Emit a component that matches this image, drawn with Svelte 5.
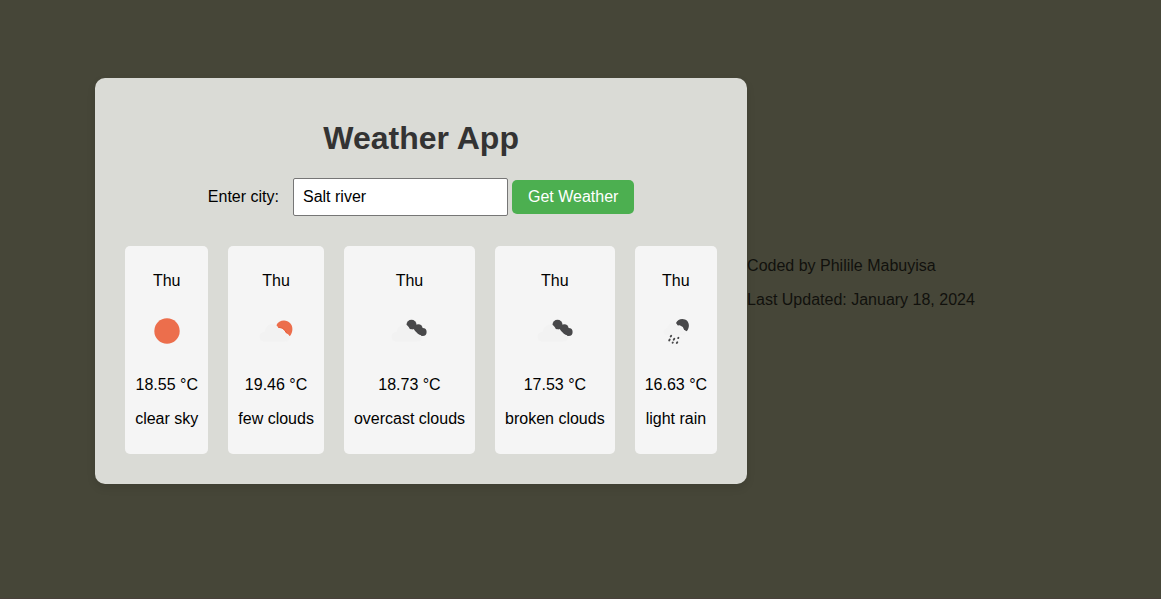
<script>
  let city = $state('Salt river');

  const forecast = [
    { day: 'Thu', icon: 'sun', temp: '18.55 °C', text: 'clear sky' },
    { day: 'Thu', icon: 'few', temp: '19.46 °C', text: 'few clouds' },
    { day: 'Thu', icon: 'clouds', temp: '18.73 °C', text: 'overcast clouds' },
    { day: 'Thu', icon: 'clouds', temp: '17.53 °C', text: 'broken clouds' },
    { day: 'Thu', icon: 'rain', temp: '16.63 °C', text: 'light rain' }
  ];
</script>

<div class="page">
  <main class="panel">
    <h1>Weather App</h1>
    <form onsubmit={(e) => e.preventDefault()}>
      <label for="city">Enter city:</label>
      <input id="city" type="text" bind:value={city} />
      <button type="submit">Get Weather</button>
    </form>
    <div class="forecast">
      {#each forecast as item}
        <article class="card">
          <p>{item.day}</p>
          <svg viewBox="0 0 50 50" role="img" aria-label={item.text}>
            {#if item.icon === 'sun'}
              <circle cx="25" cy="25" r="12.7" fill="#ec6e4c" />
            {:else if item.icon === 'few'}
              <path d="M25.3 19.4C26.6 16.2 29.700 14.600 33 14.600C37.800 14.600 41.400 18.300 41.400 22.900C41.400 25.500 40.500 28 39 30L36 27.900L34 24.500L31.300 22.300L27.700 22Z" fill="#ec6e4c" />
              <path d="M25.600 19.800L27.700 22L31.300 22.300L34 24.500L36 27.900L38.600 29.600" fill="none" stroke="#ea4f26" stroke-width="1" />
              <path d="M13 35.500C10.500 35.500 8.500 33.700 8.500 31C8.500 28.200 10.500 26.200 13.700 26C14.400 21.300 17 18 21.300 18C24 18 26.300 19.500 27.500 22C30.800 21.500 33.300 23.800 34 27C37 27.400 38.700 29 38.700 31.300C38.700 33.800 37 35.500 34.500 35.500Z" fill="#f2f2f2" />
            {:else}
              {#if item.icon === 'clouds'}
                <g fill="#48484a">
                  <circle cx="27.5" cy="18.800" r="5" />
                  <circle cx="34.400" cy="22.500" r="4.300" />
                  <circle cx="38.600" cy="26" r="4" />
                  <path d="M24 21L29 17L38 23L38 30L34 28L30 23Z" />
                </g>
                <path d="M12 35.500C9.500 35.500 7.500 33.700 7.500 31C7.500 28.200 9.500 26.200 12.700 26C13.400 21.300 16.600 18.500 20.500 18.500C23 18.500 24.500 20.500 26 23.200C30 23.200 32 25.500 33.400 28.500C36.400 28.500 38 29.500 38 31.500C38 33.900 36.300 35.500 33.500 35.500Z" fill="#f2f2f2" />
              {:else}
                <path d="M25 17C26.300 14.400 28.500 13 31.300 13C35.200 13 37.900 15.800 37.900 19.400C37.900 21.600 37.100 23.600 35.800 25.200L33.200 24L31.800 21L28.700 19.200L26.800 19.500Z" fill="#48484a" />
                <path d="M16 29C13.800 29 12.500 27.800 12.500 26C12.500 23.900 14 22.200 16.200 22C16.500 19 18.700 17 21.600 17C23.900 17 25.700 18.200 26.500 20.200C29.100 19.900 31 21.500 31.500 23.600C33.700 24 34.700 25.200 34.700 26.500C34.700 28.200 33.400 29 31.500 29Z" fill="#f3f3f3" />
                <path d="M20.200 29.700L19.700 30.500M18.700 33.600L18.200 34.400M23.300 32.800L22.700 33.700M27.400 31.800L27.200 32.100M21.800 36.500L21.600 36.800M26.300 36.200L25.800 37" stroke="#48484a" stroke-width="1.900" stroke-linecap="round" fill="none" />
              {/if}
            {/if}
          </svg>
          <p>{item.temp}</p>
          <p>{item.text}</p>
        </article>
      {/each}
    </div>
  </main>
  <footer>
    <p>Coded by Philile Mabuyisa</p>
    <p>Last Updated: January 18, 2024</p>
  </footer>
</div>

<style>
  :global(body) {
    margin: 0;
    background: #464638;
  }

  .page {
    box-sizing: border-box;
    min-height: 100vh;
    display: flex;
    justify-content: center;
    align-items: center;
    padding: 0 91px 36px 0;
    border-bottom: 1px solid #48403a;
    font-family: Arial, 'Liberation Sans', sans-serif;
    font-size: 16px;
    line-height: 18px;
    color: #000;
  }

  .panel {
    padding: 20px;
    border-radius: 10px;
    background: #dadbd6;
    box-shadow: 0 4px 8px rgba(0, 0, 0, 0.1);
    text-align: center;
  }

  h1 {
    margin: 22px 0;
    font-size: 32px;
    line-height: 36px;
    color: #333;
  }

  form {
    display: flex;
    justify-content: center;
    align-items: center;
    gap: 4px;
    margin-bottom: 20px;
  }

  label {
    margin-right: 10px;
  }

  input {
    box-sizing: border-box;
    width: 215px;
    height: 38px;
    padding: 8px 9px;
    border: 1px solid #767676;
    border-radius: 2px;
    background: #fff;
    font: inherit;
    color: #000;
  }

  button {
    padding: 8px 16px;
    border: 0;
    border-radius: 5px;
    background: #4caf50;
    color: #fff;
    font: inherit;
    cursor: pointer;
  }

  .forecast {
    display: flex;
    justify-content: center;
    gap: 20px;
    padding: 10px;
  }

  .card {
    padding: 10px;
    border-radius: 5px;
    background: #f5f5f5;
  }

  p {
    margin: 16px 0;
    white-space: nowrap;
  }

  svg {
    display: block;
    width: 50px;
    height: 50px;
    margin: 0 auto 20px;
  }

  footer {
    padding-top: 4px;
    color: #11110d;
  }
</style>
